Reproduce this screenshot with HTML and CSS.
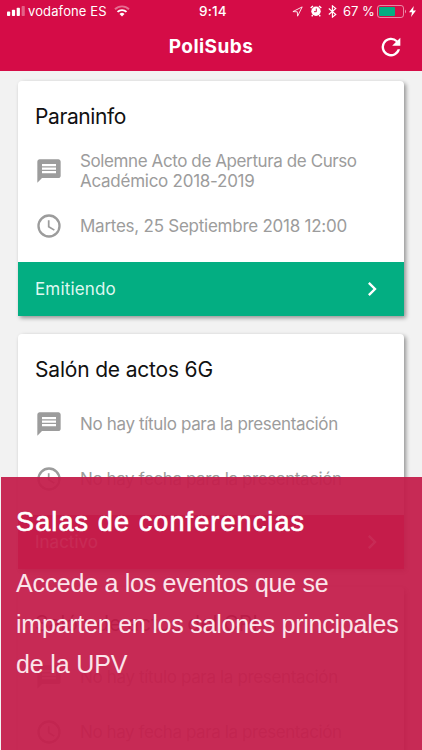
FILE: index.html
```html
<!DOCTYPE html>
<html lang="es">
<head>
<meta charset="utf-8">
<title>PoliSubs</title>
<link rel="stylesheet" href="styles.css">
</head>
<body>
<svg width="0" height="0" class="defs">
  <symbol id="chat" viewBox="0 0 24 24"><path fill="currentColor" d="M20 2H4c-1.100 0-2 .9-2 2v18l4-4h14c1.100 0 2-.9 2-2V4c0-1.100-.9-2-2-2zM6 6h12v2H6zm0 3h12v2H6zm0 3h12v2H6z"/></symbol>
  <symbol id="clock" viewBox="0 0 24 24"><path fill="currentColor" d="M12 2a10 10 0 1 0 0 20 10 10 0 0 0 0-20zm0 18a8 8 0 1 1 0-16 8 8 0 0 1 0 16zm.5-13H11v6l5.200 3.150.8-1.250-4.500-2.670z"/></symbol>
  <symbol id="chevron" viewBox="0 0 24 24"><path fill="currentColor" d="M8.590 16.590 13.170 12 8.590 7.410 10 6l6 6-6 6z"/></symbol>
</svg>
<div class="screen">
  <header class="header">
    <div class="status">
      <svg class="signal" width="18" height="10" viewBox="0 0 18 10"><g fill="#fff"><rect y="5.500" width="3.200" height="4.500" rx=".8"/><rect x="4.900" y="3.800" width="3.200" height="6.200" rx=".8"/><rect x="9.700" y="1.700" width="3.200" height="8.300" rx=".8"/><rect x="14.600" y="0" width="3.200" height="10" rx=".8" opacity=".35"/></g></svg>
      <span class="carrier">vodafone ES</span>
      <svg class="wifi" width="16" height="12" viewBox="0 0 16 12"><g fill="none" stroke="#fff" stroke-width="1.900"><path d="M1 4.200a10 10 0 0 1 14 0" opacity=".4"/><path d="M3.500 6.900a6.500 6.500 0 0 1 9 0"/></g><path fill="#fff" d="M5.500 8.900a3.700 3.700 0 0 1 5 0L8 11.500z"/></svg>
      <span class="time">9:14</span>
      <svg class="location" width="11" height="11" viewBox="0 0 11 11"><path d="M.9 5.600 10.200.9 5.600 10.200 5.300 5.800z" fill="none" stroke="#fff" stroke-opacity=".85"/></svg>
      <svg class="alarm" width="12" height="12" viewBox="0 0 12 12"><circle cx="6" cy="6.300" r="4.700" fill="#fff"/><path d="M.7 3 3 .9M11.300 3 9 .9M2.700 10 1.800 11.300M9.300 10l.9 1.300" stroke="#fff" stroke-width="1.400"/><path d="M6.300 3.500v3.200H4" fill="none" stroke="#d50c47"/></svg>
      <svg class="bluetooth" width="9" height="13" viewBox="0 0 9 13"><path d="m.8 3.500 7 6L4.400 12.200V.8l3.400 2.700-7 6" fill="none" stroke="#fff" stroke-width="1.100"/></svg>
      <span class="percent">67 %</span>
      <svg class="battery" width="30" height="13" viewBox="0 0 30 13"><rect x=".5" y=".5" width="26" height="12" rx="2.500" fill="none" stroke="#fff" stroke-opacity=".5"/><rect x="2" y="2" width="16" height="9" rx="1" fill="#03ae82"/><path d="M28 4.500q2 2 0 4z" fill="#fff" opacity=".6"/></svg>
      <svg class="bolt" width="7" height="11" viewBox="0 0 7 11"><path d="M4.800 0 0 6.200h3L2 11l5-6.500H4z" fill="#fff"/></svg>
    </div>
    <div class="toolbar">
      <h1>PoliSubs</h1>
      <svg class="refresh" width="28" height="28" viewBox="0 0 24 24"><path fill="#fff" d="M17.650 6.350A8 8 0 1 0 19.730 14h-2.080A6 6 0 1 1 12 6c1.660 0 3.140.690 4.220 1.780L13 11h7V4z"/></svg>
    </div>
  </header>
  <main class="cards">
    <article class="card">
      <h2><span class="t1">Paraninfo</span></h2>
      <div class="row"><svg class="icon"><use href="#chat"/></svg><p><span class="l1">Solemne Acto de Apertura de Curso</span><br><span class="l2">Académico 2018-2019</span></p></div>
      <div class="row"><svg class="icon"><use href="#clock"/></svg><p><span class="l3">Martes, 25 Septiembre 2018 12:00</span></p></div>
      <footer class="live"><span>Emitiendo</span><svg class="chevron"><use href="#chevron"/></svg></footer>
    </article>
    <article class="card">
      <h2><span class="t2">Salón de actos 6G</span></h2>
      <div class="row"><svg class="icon"><use href="#chat"/></svg><p><span class="l4">No hay título para la presentación</span></p></div>
      <div class="row"><svg class="icon"><use href="#clock"/></svg><p><span class="l5">No hay fecha para la presentación</span></p></div>
      <footer class="idle"><span>Inactivo</span><svg class="chevron"><use href="#chevron"/></svg></footer>
    </article>
    <article class="card">
      <h2><span class="t3">Salón de actos del CPI</span></h2>
      <div class="row"><svg class="icon"><use href="#chat"/></svg><p><span class="l4">No hay título para la presentación</span></p></div>
      <div class="row"><svg class="icon"><use href="#clock"/></svg><p><span class="l5">No hay fecha para la presentación</span></p></div>
    </article>
  </main>
  <section class="caption">
    <h3>Salas de conferencias</h3>
    <p><span class="c1">Accede a los eventos que se</span><br><span class="c2">imparten en los salones principales</span><br><span class="c3">de la UPV</span></p>
  </section>
</div>
</body>
</html>
```
FILE: styles.css
```css
* { box-sizing: border-box; margin: 0; padding: 0; }
body { font-family: Inter, "Liberation Sans", sans-serif; background: #f2f2f2; }
.defs { position: absolute; }
.screen { position: relative; width: 422px; height: 750px; overflow: hidden; background: #f2f2f2; }
.header { height: 71px; background: #d50c47; color: #fff; }
.status { height: 22px; display: flex; align-items: center; padding-left: 7px; font-size: 13px; white-space: nowrap; }
.status > * { flex: none; }
.carrier { margin-left: 3px; width: 80px; letter-spacing: .12px; }
.wifi { margin-left: 6px; }
.time { margin-left: 69px; width: 30px; font-weight: 500; font-size: 13.500px; letter-spacing: .2px; }
.location { margin-left: 63px; }
.alarm { margin-left: 7px; }
.bluetooth { margin-left: 6px; }
.percent { margin-left: 6px; width: 32px; }
.battery { margin-left: 2px; }
.bolt { margin-left: 2px; }
.toolbar { height: 49px; display: grid; grid-template-columns: 1fr auto 1fr; align-items: center; }
.toolbar h1 { grid-column: 2; font-size: 19px; line-height: 24px; font-weight: 700; letter-spacing: .45px; }
.refresh { justify-self: end; margin-right: 17px; }
.cards { padding: 9.500px 18px 0; display: flex; flex-direction: column; gap: 18px; }
.card { height: 235.300px; flex: none; background: #fff; border-radius: 4px 4px 0 0; box-shadow: 2px 2px 4px rgba(0, 0, 0, .4); display: flex; flex-direction: column; }
.card h2 { height: 62.600px; padding: 22.500px 17px 0; font-size: 21px; line-height: 28px; font-weight: 400; color: #111; white-space: nowrap; }
.t1 { letter-spacing: -.4px; }
.t2 { letter-spacing: -.18px; }
.row { height: 55.200px; display: flex; align-items: center; padding-left: 17px; color: #9c9c9c; }
.icon { width: 28px; height: 28px; flex: none; }
.row p { margin-left: 17px; font-size: 17px; line-height: 20px; white-space: nowrap; }
.l1 { letter-spacing: -.4px; }
.l2 { letter-spacing: -.26px; }
.l3 { letter-spacing: -.25px; }
.l4 { letter-spacing: -.35px; }
.l5 { letter-spacing: -.41px; }
.card footer { height: 54px; margin-top: auto; display: flex; justify-content: space-between; align-items: center; padding: 0 18px 0 17px; font-size: 17px; color: #dff8f0; }
.live span { letter-spacing: .15px; }
.chevron { width: 28px; height: 28px; color: #fff; }
.card .live { background: #03ae82; }
.card .idle { background: #d50c35; color: #fff; }
.caption { position: absolute; left: 1px; right: 0; top: 477px; bottom: 0; padding: 28px 15px 0; background: rgba(196, 30, 75, .945); color: #fff; white-space: nowrap; font-family: "Liberation Sans", Arial, sans-serif; }
.caption h3 { font-size: 27px; line-height: 34px; font-weight: 400; letter-spacing: 1.120px; -webkit-text-stroke: .6px #fff; }
.caption p { margin-top: 24px; font-size: 25px; line-height: 40.500px; color: #fbe4ea; }
.c1 { letter-spacing: -.27px; }
.c2 { letter-spacing: -.23px; }
.c3 { letter-spacing: -.15px; }
```
